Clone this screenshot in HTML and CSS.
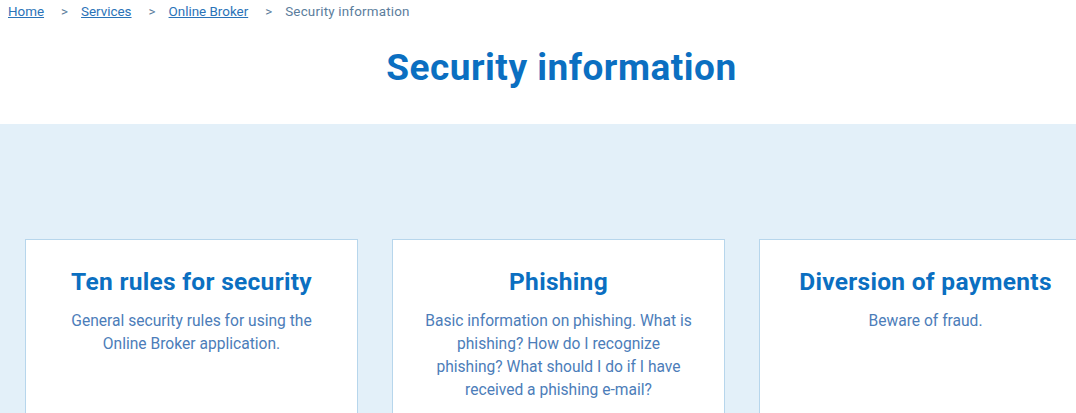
FILE: index.html
```html
<!DOCTYPE html>
<html>
<head>
<meta charset="utf-8">
<link rel="stylesheet" href="styles.css">
</head>
<body>
<nav class="crumbs">
  <a href="#">Home</a><span class="sep">&gt;</span>
  <a href="#">Services</a><span class="sep">&gt;</span>
  <a href="#">Online Broker</a><span class="sep">&gt;</span>
  <span class="current">Security information</span>
</nav>
<h1 class="title">Security information</h1>
<section class="band">
  <div class="cards">
    <div class="card">
      <h2>Ten rules for security</h2>
      <p>General security rules for using the Online Broker application.</p>
    </div>
    <div class="card">
      <h2>Phishing</h2>
      <p>Basic information on phishing. What is phishing? How do I recognize phishing? What should I do if I have received a phishing e-mail?</p>
    </div>
    <div class="card">
      <h2>Diversion of payments</h2>
      <p>Beware of fraud.</p>
    </div>
  </div>
</section>
</body>
</html>
```
FILE: styles.css
```css
html, body { margin: 0; padding: 0; background: #fff; overflow: hidden; }
body { font-family: Roboto, "Noto Sans", sans-serif; width: 1076px; height: 413px; }
.crumbs { padding: 3px 8px 0; font-size: 13.4px; line-height: 17px; color: #5b7d9c; display: flex; align-items: baseline; }
.crumbs a { color: #2a73b8; text-decoration: underline; }
.crumbs .sep { margin: 0 13px 0 17px; color: #5b7d9c; }
.crumbs .current { color: #5b7d9c; letter-spacing: 0.2px; }
.title { margin: 26px 0 0; padding-left: 47px; text-align: center; font-size: 37px; line-height: 44px; font-weight: 700; color: #0b6fc1; letter-spacing: 0.5px; height: 78px; }
.band { background: #e3f0f9; padding-top: 115px; height: 174px; overflow: hidden; }
.cards { display: flex; gap: 34px; padding-left: 25px; }
.card { flex: 0 0 333px; background: #fff; border: 1px solid #b7d6ec; height: 200px; text-align: center; padding: 26px 16px 0; box-sizing: border-box; }
.card h2 { margin: 0; font-size: 24.5px; line-height: 32px; font-weight: 700; color: #0b6fc1; letter-spacing: 0.3px; }
.card p { margin: 12px auto 0; max-width: 270px; font-size: 15.6px; line-height: 23px; color: #4c7db9; }
```
